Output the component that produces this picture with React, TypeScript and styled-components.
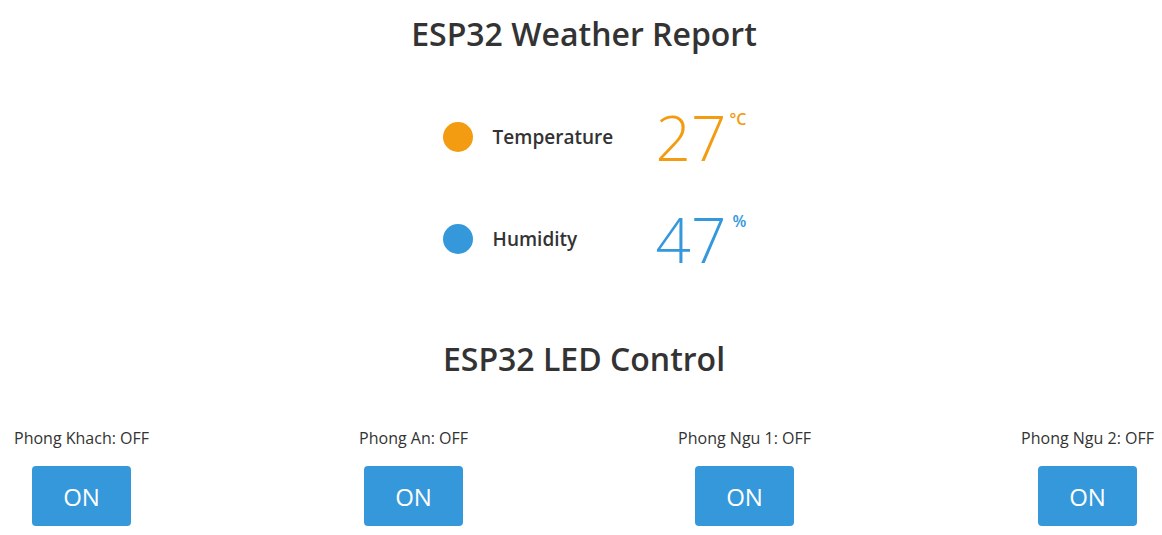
import React from "react";
import styled, { createGlobalStyle } from "styled-components";

const Global = createGlobalStyle`
  html, body { margin: 0; padding: 0; background: #fff; }
  body { font-family: "Open Sans", "Liberation Sans", sans-serif; color: #333; }
`;

const Page = styled.div`
  padding: 0 8px 0 14px;
  display: flex;
  flex-direction: column;
  align-items: center;
`;

const Title = styled.h2<{ $top: number }>`
  margin: ${(p) => p.$top}px 0 0;
  font-size: 32px;
  font-weight: 600;
  line-height: 44px;
  color: #333;
  text-align: center;
`;

const Readings = styled.div`
  margin-top: 48px;
  margin-left: 21px;
  display: grid;
  grid-template-columns: 30px 143px auto;
  column-gap: 20px;
  row-gap: 36px;
  align-items: center;
`;

const Dot = styled.span<{ $color: string }>`
  width: 30px;
  height: 30px;
  border-radius: 50%;
  background: ${(p) => p.$color};
`;

const Label = styled.span`
  font-size: 19px;
  font-weight: 600;
  color: #333;
`;

const Value = styled.div<{ $color: string }>`
  display: flex;
  align-items: flex-start;
  color: ${(p) => p.$color};
  height: 66px;
`;

const Number = styled.span`
  font-size: 62px;
  font-weight: 300;
  line-height: 66px;
`;

const Unit = styled.span<{ $gap: number }>`
  font-size: 16px;
  font-weight: 600;
  line-height: 16px;
  margin-left: ${(p) => p.$gap}px;
  margin-top: 7px;
`;

const Controls = styled.div`
  align-self: stretch;
  margin-top: 46px;
  display: flex;
  justify-content: space-between;
`;

const Control = styled.div`
  display: flex;
  flex-direction: column;
  align-items: center;
`;

const RoomLabel = styled.p`
  margin: 0;
  font-size: 16px;
  line-height: 22px;
  color: #333;
`;

const Button = styled.button`
  margin-top: 17px;
  width: 99px;
  height: 60px;
  border: none;
  border-radius: 4px;
  background: #3498db;
  color: #fff;
  font-family: "Open Sans", "Liberation Sans", sans-serif;
  font-size: 24px;
  cursor: pointer;
`;

const rooms = ["Phong Khach", "Phong An", "Phong Ngu 1", "Phong Ngu 2"];

export default function App() {
  return (
    <>
      <Global />
      <Page>
        <Title $top={12}>ESP32 Weather Report</Title>
        <Readings>
          <Dot $color="#f39c12" />
          <Label>Temperature</Label>
          <Value $color="#f39c12">
            <Number>27</Number>
            <Unit $gap={3}>°C</Unit>
          </Value>
          <Dot $color="#3498db" />
          <Label>Humidity</Label>
          <Value $color="#3498db">
            <Number>47</Number>
            <Unit $gap={6}>%</Unit>
          </Value>
        </Readings>
        <Title $top={65}>ESP32 LED Control</Title>
        <Controls>
          {rooms.map((r) => (
            <Control key={r}>
              <RoomLabel>{r}: OFF</RoomLabel>
              <Button>ON</Button>
            </Control>
          ))}
        </Controls>
      </Page>
    </>
  );
}
